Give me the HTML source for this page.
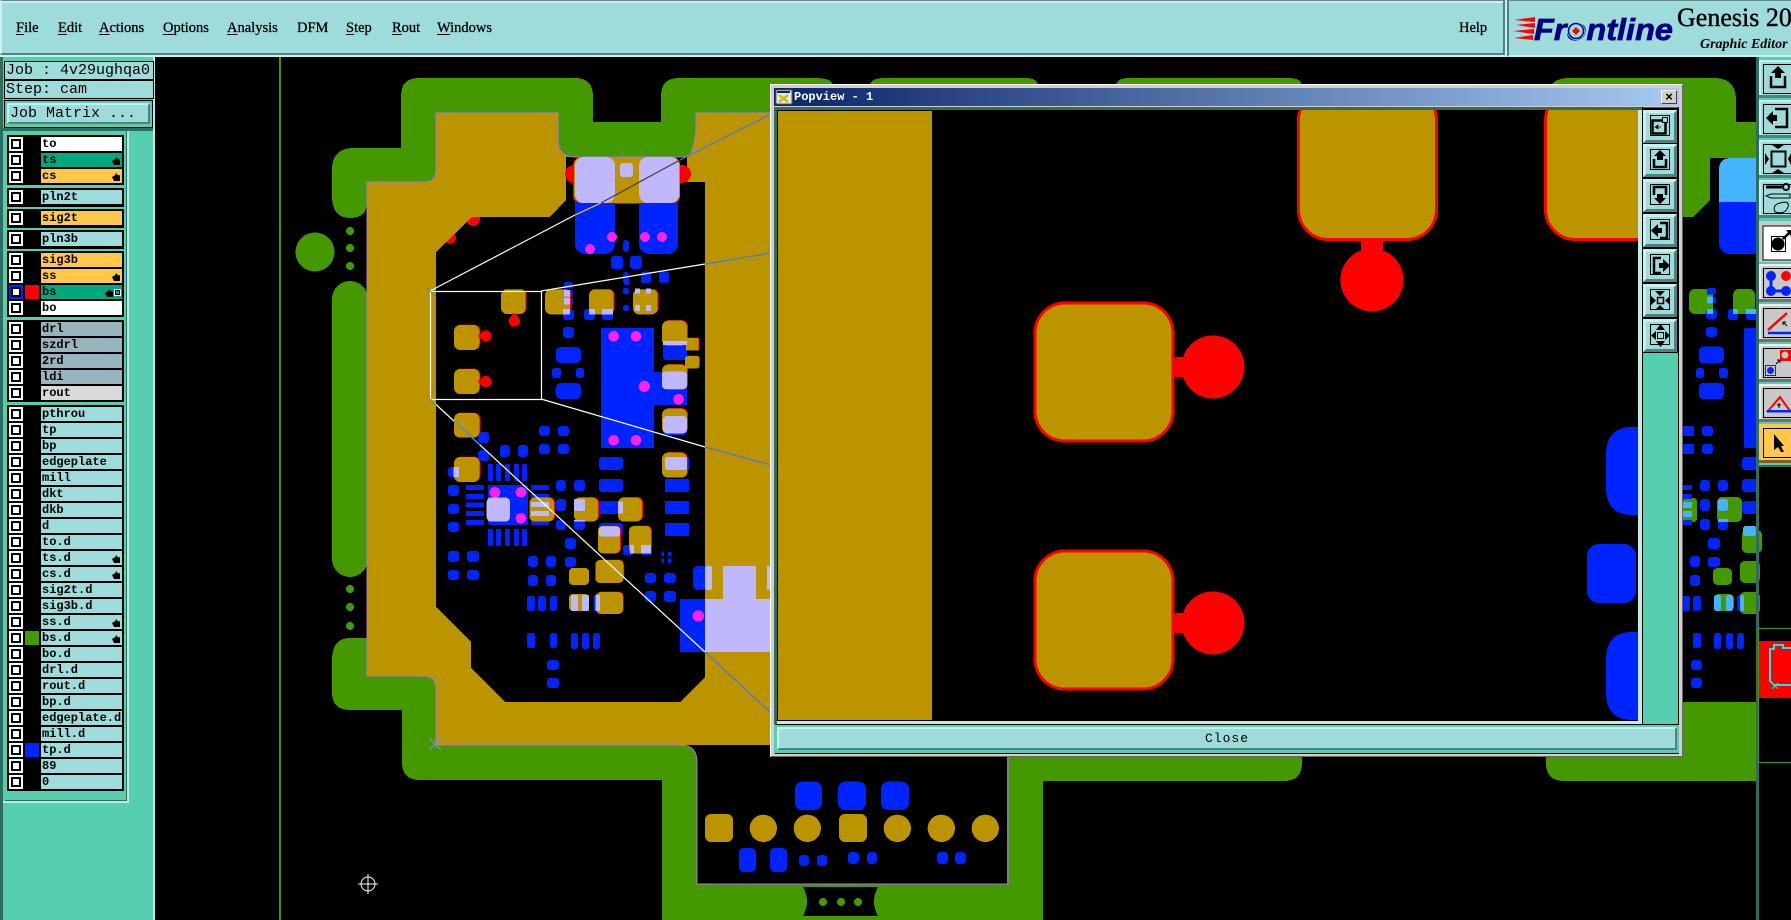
<!DOCTYPE html>
<html><head><meta charset="utf-8"><title>Genesis 2000 Graphic Editor</title>
<style>
html,body{margin:0;padding:0;background:#000;width:1791px;height:920px;overflow:hidden}
body{position:relative;font-family:"Liberation Mono",monospace;color:#000}
.a{position:absolute}
svg{position:absolute;left:0;top:0;display:block}
.m{position:absolute;top:20px;font:14.5px/17px "Liberation Serif",serif;-webkit-text-stroke:.3px #000;white-space:nowrap}
.m u{text-underline-offset:2px}
.inf{position:absolute;left:4px;width:147px;background:#9edcdc;border:1px solid #000;font:15px/17px "Liberation Mono",monospace;padding-left:1px;white-space:pre;overflow:hidden}
.grp{position:absolute;left:7px;width:117px;background:#000}
.r{position:absolute;left:9px;width:113px;height:14px}
.r i{position:absolute;left:0;top:0;width:14px;height:14px;background:#fff}
.r i::after{content:"";position:absolute;left:2px;top:2px;width:6px;height:6px;border:2px solid #000;background:#fff}
.r.sel i{background:#0024ff}
.r b{position:absolute;left:32px;top:0;width:80px;height:14px;padding-left:1px;background:#9edcdc;font:bold 12px/14px "Liberation Mono",monospace;white-space:nowrap;overflow:hidden}
.h{position:absolute;right:2px;top:4px;width:8px;height:8px;background:#000;clip-path:polygon(0 50%,35% 30%,55% 0,70% 25%,100% 30%,100% 100%,25% 100%)}
.s{position:absolute;left:16px;top:0;width:14px;height:14px}
.W b{background:#fff}.T b{background:#00a87e}.O b{background:#ffc84b}.G b{background:#9ab4bd}.L b{background:#d9d9d9}
</style></head><body>

<!-- PCB canvas -->
<svg width="1791" height="920" viewBox="0 0 1791 920" shape-rendering="crispEdges">
<rect x="279" y="57" width="2" height="863" fill="#449900"/>
<g fill="#449900">
<path d="M332 170Q332 148 354 148H401V96Q401 78 419 78H575Q593 78 593 96V122H661V96Q661 78 679 78H815Q833 78 833 86V157H436V182H367V202Q367 218 350 218Q332 218 332 196Z"/>
<path d="M870 86Q870 78 885 78H1025Q1038 78 1038 86V100H870Z"/>
<path d="M1116 86Q1116 78 1130 78H1288Q1302 78 1302 86V100H1116Z"/>
<rect x="332" y="281" width="36" height="296" rx="18"/>
<path d="M332 660Q332 638 350 638H440V745H700V780H420Q402 780 402 762V710H350Q332 710 332 692Z"/>
<rect x="662" y="745" width="381" height="175"/>
<path d="M1005 745H1302V763Q1302 781 1284 781H1005Z"/>
<path d="M1547 100Q1547 78 1569 78H1714Q1736 78 1736 100V122H1756V158H1710V200L1693 217H1540Z"/>
<path d="M1546 720H1683V702H1756V781H1564Q1546 781 1546 763Z"/>
<circle cx="315" cy="252" r="19.5"/>
<circle cx="350" cy="231" r="4"/><circle cx="350" cy="248" r="4"/><circle cx="350" cy="266" r="4"/>
<circle cx="350" cy="589" r="4"/><circle cx="350" cy="607" r="4"/><circle cx="350" cy="626" r="4"/>
</g>
<rect x="697" y="745" width="310" height="139" fill="#000"/>
<path d="M803 887H878Q870 901 878 916H803Q811 901 803 887Z" fill="#000"/>
<g fill="#449900"><circle cx="823" cy="902" r="4"/><circle cx="841" cy="902" r="4"/><circle cx="858" cy="902" r="4"/></g>
<!-- red partly behind the copper -->
<g fill="#f00"><circle cx="473" cy="219" r="7"/><circle cx="450" cy="238" r="6"/></g>
<!-- gold copper -->
<path fill="#bb9400" d="M367 182H424Q436 182 436 170V113H558V140Q558 150 566 155V200L550 217H472L436 252V607L471 642V668L505 702H680L705 677V182H687V157Q696 150 696 113H790V745H436V688Q436 676 424 676H367Z"/>
<rect x="680" y="745" width="17" height="12" fill="#449900"/>
<path d="M680 745Q697 745 697 762V745Z" fill="#000"/>
<g fill="none" stroke="#b070f0" stroke-width="1" shape-rendering="auto">
<path d="M367 676V182H424Q436 182 436 170V113H558V140Q558 157 575 157H680Q696 157 696 140V113H770"/>
<path d="M367 676H424Q436 676 436 688V745H680Q697 745 697 762V884H1008V757"/>
</g>
<g fill="#f00"><circle cx="574" cy="174" r="9"/><circle cx="682" cy="174" r="9"/></g>
<!-- top pads -->
<rect x="573" y="157" width="107" height="47" fill="#f00" rx="8"/>
<g fill="#0024ff">
<rect x="575" y="157" width="40" height="97" rx="10"/>
<rect x="639" y="157" width="39" height="97" rx="10"/>
<rect x="623" y="240" width="6" height="12" rx="3"/>
<rect x="611" y="256" width="12" height="13" rx="3"/>
<rect x="630" y="256" width="12" height="13" rx="3"/>
<rect x="623" y="272" width="6" height="12" rx="3"/>
<rect x="641" y="272" width="10" height="11" rx="2"/>
<rect x="659" y="272" width="10" height="11" rx="2"/>
<rect x="623" y="288" width="6" height="6" rx="2"/>
</g>
<rect x="574" y="157" width="106" height="46" fill="#bb9400" rx="8"/>
<g fill="#c0b8ff">
<rect x="575" y="157" width="40" height="46" rx="9"/>
<rect x="639" y="157" width="40" height="46" rx="9"/>
<rect x="620" y="163" width="13" height="14" rx="3"/>
</g>
<g fill="#ff22ee">
<circle cx="612" cy="237" r="5"/><circle cx="590" cy="249" r="5"/><circle cx="645" cy="237" r="5"/><circle cx="662" cy="237" r="5"/>
</g>

<!-- centre cluster (coords are 3x crop) -->
<g transform="translate(430 270) scale(.33333)">
<g fill="#0024ff">
<path d="M513 174H672V306H771V405H672V534H513Z"/>
<rect x="378" y="231" width="75" height="48" rx="14"/><rect x="378" y="339" width="75" height="48" rx="14"/>
<rect x="366" y="294" width="27" height="30" rx="8"/><rect x="438" y="294" width="24" height="30" rx="8"/>
<rect x="399" y="171" width="33" height="33" rx="9"/><rect x="399" y="117" width="33" height="33" rx="9"/>
<rect x="462" y="117" width="33" height="33" rx="9"/><rect x="516" y="117" width="33" height="33" rx="9"/>
<rect x="402" y="36" width="27" height="20" rx="6"/><rect x="402" y="60" width="27" height="20" rx="6"/><rect x="402" y="84" width="27" height="20" rx="6"/>
<rect x="582" y="10" width="15" height="36" rx="6"/><rect x="633" y="5" width="30" height="33" rx="8"/><rect x="687" y="5" width="30" height="33" rx="8"/>
<rect x="579" y="54" width="18" height="18" rx="6"/><rect x="579" y="105" width="18" height="18" rx="6"/>
<rect x="615" y="55" width="15" height="15" rx="3"/><rect x="648" y="55" width="15" height="15" rx="3"/>
<rect x="699" y="216" width="72" height="54" rx="10"/>
<rect x="699" y="438" width="72" height="57" rx="10"/>
<rect x="720" y="561" width="57" height="39"/>
<rect x="507" y="561" width="72" height="39" rx="9"/><rect x="507" y="627" width="72" height="39" rx="9"/><rect x="507" y="693" width="72" height="39" rx="9"/><rect x="507" y="759" width="72" height="39" rx="9"/>
<rect x="705" y="627" width="72" height="39" rx="4"/><rect x="705" y="693" width="72" height="39" rx="4"/><rect x="705" y="759" width="72" height="39" rx="4"/>
<rect x="327" y="468" width="33" height="30" rx="9"/><rect x="384" y="468" width="33" height="30" rx="9"/><rect x="327" y="522" width="33" height="30" rx="9"/><rect x="384" y="522" width="33" height="30" rx="9"/>
<rect x="144" y="486" width="33" height="33" rx="9"/><rect x="144" y="540" width="33" height="33" rx="9"/>
<rect x="210" y="525" width="30" height="36" rx="9"/><rect x="264" y="525" width="30" height="36" rx="9"/>
<rect x="174" y="582" width="15" height="51" rx="3"/><rect x="198" y="582" width="15" height="51" rx="3"/><rect x="225" y="582" width="15" height="51" rx="3"/><rect x="252" y="582" width="15" height="51" rx="3"/><rect x="276" y="582" width="15" height="51" rx="3"/>
<rect x="174" y="777" width="15" height="51" rx="3"/><rect x="198" y="777" width="15" height="51" rx="3"/><rect x="225" y="777" width="15" height="51" rx="3"/><rect x="252" y="777" width="15" height="51" rx="3"/><rect x="276" y="777" width="15" height="51" rx="3"/>
<rect x="108" y="645" width="54" height="15" rx="3"/><rect x="108" y="672" width="54" height="15" rx="3"/><rect x="108" y="697" width="54" height="15" rx="3"/><rect x="108" y="723" width="54" height="15" rx="3"/><rect x="108" y="750" width="54" height="15" rx="3"/>
<rect x="303" y="645" width="54" height="15" rx="3"/><rect x="303" y="672" width="54" height="15" rx="3"/><rect x="303" y="750" width="54" height="15" rx="3"/>
<rect x="174" y="645" width="120" height="120" rx="6"/>
<rect x="54" y="591" width="33" height="30" rx="9"/><rect x="54" y="645" width="33" height="33" rx="9"/><rect x="54" y="702" width="33" height="30" rx="9"/><rect x="54" y="756" width="33" height="30" rx="9"/>
<rect x="378" y="630" width="30" height="33" rx="9"/><rect x="432" y="630" width="33" height="33" rx="9"/><rect x="378" y="687" width="30" height="36" rx="9"/><rect x="378" y="750" width="30" height="30" rx="9"/><rect x="432" y="750" width="33" height="30" rx="9"/><rect x="405" y="804" width="33" height="33" rx="9"/>
<rect x="579" y="825" width="33" height="30" rx="8"/><rect x="633" y="825" width="33" height="30" rx="8"/>
</g>
<g fill="#bb9400" style="filter:drop-shadow(3px -1px 0 #f00)">
<rect x="213" y="58" width="74" height="74" rx="18"/><rect x="72" y="165" width="76" height="75" rx="18"/><rect x="72" y="297" width="76" height="75" rx="18"/><rect x="72" y="429" width="76" height="74" rx="18"/><rect x="72" y="561" width="76" height="75" rx="18"/>
<rect x="345" y="58" width="75" height="75" rx="18"/><rect x="477" y="58" width="74" height="75" rx="18"/><rect x="609" y="58" width="74" height="75" rx="18"/>
<rect x="696" y="152" width="75" height="75" rx="18"/><rect x="696" y="284" width="75" height="75" rx="18"/><rect x="696" y="416" width="75" height="75" rx="18"/><rect x="696" y="548" width="75" height="75" rx="18"/>
<rect x="768" y="204" width="38" height="38" rx="4"/><rect x="765" y="258" width="42" height="38" rx="8"/>
<rect x="298" y="682" width="74" height="73" rx="18"/><rect x="432" y="682" width="72" height="73" rx="18"/><rect x="564" y="682" width="72" height="73" rx="18"/>
<rect x="504" y="768" width="66" height="82" rx="14"/><rect x="597" y="768" width="66" height="82" rx="14"/>
</g>
<g fill="#f00">
<circle cx="253" cy="153" r="17"/><rect x="247" y="130" width="12" height="12"/>
<circle cx="168" cy="198" r="17"/><rect x="146" y="192" width="10" height="12"/>
<circle cx="168" cy="335" r="17"/><rect x="146" y="329" width="10" height="12"/>
</g>
<g fill="#c0b8ff">
<rect x="699" y="213" width="72" height="12"/>
<rect x="402" y="60" width="18" height="20"/><rect x="402" y="84" width="18" height="20"/><rect x="399" y="117" width="21" height="16"/>
<rect x="477" y="117" width="18" height="16"/><rect x="516" y="117" width="33" height="16"/>
<rect x="615" y="55" width="15" height="15"/><rect x="648" y="55" width="15" height="15"/><rect x="615" y="105" width="15" height="18"/><rect x="648" y="105" width="15" height="18"/>
<rect x="696" y="305" width="75" height="52" rx="10"/><rect x="699" y="438" width="72" height="52" rx="12"/><rect x="705" y="561" width="66" height="39" rx="8"/>
<rect x="70" y="591" width="17" height="30"/>
<rect x="303" y="696" width="54" height="15"/><rect x="303" y="723" width="54" height="15"/>
<rect x="432" y="687" width="33" height="36" rx="5"/>
<rect x="564" y="695" width="15" height="36"/>
<rect x="432" y="750" width="33" height="5"/>
<rect x="507" y="770" width="63" height="30" rx="8"/>
<rect x="600" y="825" width="12" height="25"/><rect x="633" y="825" width="30" height="25"/>
</g>
<g fill="#0024ff"><rect x="507" y="693" width="57" height="39" rx="8"/></g>
<g fill="#ff22ee">
<circle cx="551" cy="199" r="16"/><circle cx="618" cy="199" r="16"/><circle cx="643" cy="349" r="17"/><circle cx="746" cy="388" r="16"/><circle cx="551" cy="511" r="16"/><circle cx="618" cy="511" r="16"/>
<circle cx="195" cy="667" r="16"/><circle cx="273" cy="667" r="16"/><circle cx="273" cy="745" r="16"/>
</g>
<rect x="170" y="682" width="70" height="73" rx="14" fill="#c0b8ff"/>
</g>

<!-- lower cluster -->
<g transform="translate(430 540) scale(.33333)">
<g fill="#0024ff">
<rect x="54" y="33" width="33" height="33" rx="9"/><rect x="111" y="33" width="36" height="33" rx="9"/><rect x="54" y="90" width="33" height="30" rx="9"/><rect x="111" y="90" width="36" height="30" rx="9"/>
<rect x="294" y="48" width="30" height="33" rx="9"/><rect x="348" y="48" width="30" height="33" rx="9"/><rect x="405" y="51" width="33" height="30" rx="9"/><rect x="294" y="105" width="30" height="33" rx="9"/><rect x="348" y="105" width="30" height="33" rx="9"/>
<rect x="291" y="168" width="24" height="45" rx="7"/><rect x="324" y="168" width="24" height="45" rx="7"/><rect x="360" y="168" width="21" height="45" rx="7"/>
<rect x="291" y="279" width="24" height="45" rx="7"/><rect x="360" y="279" width="21" height="45" rx="7"/><rect x="423" y="279" width="21" height="48" rx="7"/><rect x="456" y="279" width="21" height="48" rx="7"/><rect x="489" y="279" width="21" height="48" rx="7"/>
<rect x="351" y="360" width="36" height="30" rx="9"/><rect x="351" y="414" width="36" height="30" rx="9"/>
<rect x="694" y="35" width="8" height="14" rx="2"/><rect x="714" y="35" width="10" height="14" rx="2"/><rect x="694" y="55" width="8" height="14" rx="2"/><rect x="714" y="55" width="10" height="14" rx="2"/>
<rect x="645" y="99" width="33" height="30" rx="9"/><rect x="702" y="99" width="36" height="30" rx="9"/><rect x="645" y="153" width="33" height="33" rx="9"/><rect x="702" y="153" width="36" height="33" rx="9"/>
<rect x="789" y="78" width="57" height="72" rx="14"/>
<rect x="750" y="177" width="75" height="159"/>
<rect x="490" y="165" width="12" height="48" rx="4"/>
</g>
<g fill="#bb9400" style="filter:drop-shadow(2px -1px 0 #f00)">
<rect x="496" y="60" width="84" height="69" rx="14"/><rect x="498" y="156" width="81" height="66" rx="14"/>
</g>
<g fill="#bb9400">
<rect x="417" y="84" width="60" height="51" rx="12"/><rect x="417" y="162" width="60" height="51" rx="12"/>
</g>
<g fill="#c0b8ff">
<rect x="423" y="165" width="21" height="48" rx="5"/><rect x="456" y="165" width="21" height="48" rx="5"/><rect x="497" y="165" width="13" height="48" rx="4"/>
<rect x="825" y="78" width="21" height="72" rx="6"/><rect x="879" y="78" width="99" height="99"/><rect x="825" y="177" width="195" height="159"/><rect x="1011" y="78" width="9" height="72" rx="3"/>
</g>
<circle cx="805" cy="228" r="17" fill="#ff22ee"/>
</g>

<!-- right of popup cluster -->
<g transform="translate(1600 290) scale(.33333)">
<g fill="#449900">
<rect x="267" y="-3" width="72" height="75" rx="18"/><rect x="399" y="-3" width="66" height="75" rx="18"/>
<rect x="249" y="624" width="42" height="72" rx="10"/><rect x="351" y="621" width="75" height="75" rx="16"/>
<rect x="426" y="720" width="60" height="69" rx="14"/>
<rect x="339" y="834" width="57" height="51" rx="14"/><rect x="420" y="813" width="60" height="66" rx="14"/><rect x="420" y="906" width="60" height="66" rx="14"/><rect x="342" y="912" width="60" height="51" rx="14"/>
</g>
<g fill="#0024ff">
<rect x="321" y="-6" width="27" height="20" rx="6"/><rect x="321" y="20" width="27" height="20" rx="5"/>
<rect x="318" y="57" width="33" height="30" rx="9"/><rect x="384" y="57" width="30" height="33" rx="9"/><rect x="438" y="57" width="40" height="33" rx="9"/>
<rect x="318" y="111" width="33" height="30" rx="9"/>
<rect x="297" y="170" width="75" height="50" rx="12"/><rect x="288" y="234" width="24" height="30" rx="8"/><rect x="357" y="234" width="27" height="30" rx="8"/><rect x="297" y="279" width="75" height="48" rx="12"/>
<rect x="432" y="114" width="40" height="360" rx="6"/>
<rect x="249" y="408" width="33" height="30" rx="5"/><rect x="306" y="408" width="33" height="30" rx="9"/><rect x="249" y="462" width="33" height="30" rx="5"/><rect x="306" y="462" width="33" height="30" rx="9"/>
<rect x="426" y="501" width="50" height="39" rx="10"/><rect x="426" y="567" width="50" height="39" rx="10"/><rect x="426" y="633" width="50" height="39" rx="10"/>
<rect x="249" y="585" width="27" height="15"/><rect x="249" y="612" width="27" height="15"/><rect x="249" y="690" width="27" height="15"/>
<rect x="300" y="570" width="30" height="33" rx="9"/><rect x="354" y="570" width="30" height="33" rx="9"/><rect x="300" y="627" width="30" height="36" rx="9"/><rect x="300" y="687" width="30" height="33" rx="9"/><rect x="354" y="687" width="30" height="33" rx="9"/>
<rect x="324" y="744" width="36" height="33" rx="9"/><rect x="270" y="798" width="30" height="33" rx="9"/><rect x="324" y="801" width="36" height="30" rx="9"/><rect x="270" y="855" width="30" height="33" rx="9"/>
<rect x="249" y="918" width="21" height="45" rx="5"/><rect x="279" y="918" width="24" height="45" rx="7"/><rect x="411" y="915" width="21" height="48" rx="7"/>
<rect x="279" y="1029" width="24" height="45" rx="7"/><rect x="342" y="1029" width="21" height="48" rx="7"/><rect x="378" y="1029" width="21" height="48" rx="7"/><rect x="411" y="1029" width="21" height="48" rx="7"/>
<rect x="273" y="1110" width="33" height="30" rx="9"/><rect x="273" y="1164" width="33" height="30" rx="9"/>
</g>
<g fill="#44b4ff">
<rect x="321" y="20" width="18" height="20" rx="4"/><rect x="321" y="57" width="18" height="15"/><rect x="399" y="57" width="15" height="15"/><rect x="438" y="57" width="30" height="15"/>
<rect x="354" y="627" width="30" height="36" rx="8"/><rect x="249" y="636" width="27" height="18"/><rect x="249" y="663" width="27" height="18"/><rect x="354" y="687" width="30" height="9"/>
<rect x="429" y="708" width="40" height="30" rx="8"/>
<rect x="342" y="915" width="21" height="48" rx="7"/><rect x="378" y="915" width="21" height="48" rx="7"/><rect x="420" y="915" width="12" height="48" rx="4"/>
</g>
</g>
<!-- blue pad top right -->
<rect x="1719" y="158" width="60" height="96" rx="11" fill="#0024ff"/>
<path d="M1719 202V170Q1719 158 1731 158H1790V202Z" fill="#44b4ff"/>

<!-- U-shaped bottom pads -->
<g transform="translate(640 730) scale(.33333)">
<g fill="#0024ff">
<rect x="465" y="155" width="81" height="85" rx="22"/><rect x="594" y="155" width="84" height="85" rx="22"/><rect x="723" y="155" width="84" height="85" rx="22"/>
<rect x="297" y="354" width="51" height="72" rx="14"/><rect x="390" y="354" width="51" height="72" rx="14"/>
<rect x="477" y="375" width="30" height="33" rx="11"/><rect x="531" y="375" width="30" height="33" rx="11"/>
<rect x="624" y="366" width="33" height="36" rx="11"/><rect x="681" y="366" width="30" height="36" rx="11"/>
<rect x="891" y="366" width="33" height="36" rx="11"/><rect x="945" y="366" width="33" height="36" rx="11"/>
</g>
<g fill="#bb9400">
<rect x="195" y="252" width="84" height="84" rx="18"/><circle cx="370" cy="295" r="41"/><circle cx="502" cy="295" r="41"/>
<rect x="597" y="252" width="84" height="84" rx="18"/><circle cx="772" cy="295" r="41"/><circle cx="904" cy="295" r="41"/><circle cx="1036" cy="295" r="41"/>
</g>
</g>

<!-- view box + connecting lines -->
<g shape-rendering="auto" fill="none">
<rect x="430.5" y="291.5" width="111" height="108" stroke="#fff" stroke-width="1.2"/>
<path d="M430 291L575 215M541 291L705 264M541 399L705 447M430 399L705 652" stroke="#fff" stroke-width="1.2"/>
<path d="M575 215L601 203" stroke="#ffd000" stroke-width="1.2"/>
<path d="M601 203L680 160" stroke="#443a30" stroke-width="1.2"/>
<path d="M680 160L771 114M705 264L771 253M705 447L771 465M705 652L771 713M430 399L436 405M454 421L480 445" stroke="#4a7ae0" stroke-width="1.2"/>
<path d="M427 288L436 296" stroke="#4a7ae0" stroke-width="1"/>
<path d="M429 738L441 750M441 738L429 750" stroke="#8090d0" stroke-width="1"/>
<circle cx="368" cy="884" r="7" stroke="#fff"/>
<path d="M368 874V894M358 884H378" stroke="#fff"/>
</g>
</svg>

<!-- Top bars -->
<div class="a" style="left:0;top:0;width:1505px;height:55px;background:#9edcdc;box-sizing:border-box;border-top:1px solid #608a88;border-bottom:2px solid #508080;border-left:2px solid #c8f0ee;border-right:2px solid #508080;box-shadow:inset 0 2px 0 #c8f0ee"></div>
<div class="a" style="left:0;top:55px;width:1507px;height:2px;background:#c8f0ee"></div>
<div class="a" style="left:1505px;top:0;width:2px;height:57px;background:#c8f0ee"></div>
<div class="a" style="left:1507px;top:0;width:284px;height:57px;background:#9edcdc;box-sizing:border-box;border-top:1px solid #608a88;border-left:2px solid #508080;border-bottom:2px solid #c8f0ee"></div>
<div class="m" style="left:16px"><u>F</u>ile</div>
<div class="m" style="left:58px"><u>E</u>dit</div>
<div class="m" style="left:99px"><u>A</u>ctions</div>
<div class="m" style="left:163px"><u>O</u>ptions</div>
<div class="m" style="left:227px"><u>A</u>nalysis</div>
<div class="m" style="left:297px">DFM</div>
<div class="m" style="left:346px"><u>S</u>tep</div>
<div class="m" style="left:392px"><u>R</u>out</div>
<div class="m" style="left:437px"><u>W</u>indows</div>
<div class="m" style="left:1459px">Help</div>

<!-- Logo -->
<svg width="1791" height="57" viewBox="0 0 1791 57" style="height:57px">
<g fill="#f00">
<path d="M1514 20L1535 17V22Z"/><path d="M1516 25L1535 23V28Z"/><path d="M1513 31L1534 29V34Z"/><path d="M1514 38L1533 35V40Z"/>
</g>
<text x="1534" y="40" textLength="139" lengthAdjust="spacingAndGlyphs" font-family="Liberation Sans" font-weight="bold" font-style="italic" font-size="31" fill="#000080" stroke="#000080" stroke-width=".7">Frontline</text>
<circle cx="1576" cy="31" r="9" fill="#9edcdc"/>
<circle cx="1576" cy="31" r="7.5" fill="none" stroke="#000080" stroke-width="1.5"/>
<path d="M1576 27L1580 31L1576 35L1572 31Z" fill="#f00"/>
<text x="1677" y="26" font-family="Liberation Serif" font-size="26" fill="#000" stroke="#000" stroke-width=".4">Genesis 2000</text>
<text x="1700" y="48" font-family="Liberation Serif" font-weight="bold" font-style="italic" font-size="14" fill="#000">Graphic Editor</text>
</svg>

<!-- Left panel -->
<div class="a" style="left:0;top:57px;width:155px;height:863px;background:#56ceb0"></div>
<div class="a" style="left:153px;top:57px;width:2px;height:863px;background:#b8ece0"></div>
<div class="a" style="left:0;top:57px;width:3px;height:863px;background:#2f6d5f"></div>
<div class="inf" style="top:61px;height:17px">Job : 4v29ughqa0</div>
<div class="inf" style="top:80px;height:17px">Step: cam</div>
<div class="a" style="left:4px;top:100px;width:147px;height:26px;border:1px solid #000"></div>
<div class="a" style="left:7px;top:103px;width:143px;height:21px;box-sizing:border-box;background:#9edcdc;border-top:2px solid #c8f0ee;border-left:2px solid #c8f0ee;border-bottom:2px solid #508080;border-right:2px solid #508080;font:15px/17px 'Liberation Mono',monospace;padding-left:1px;white-space:pre">Job Matrix ...</div>
<div class="a" style="left:3px;top:128px;width:150px;height:3px;background:#2f6d5f"></div>
<div class="a" style="left:126px;top:131px;width:1px;height:670px;background:#2f6d5f"></div>
<div class="a" style="left:127px;top:131px;width:2px;height:672px;background:#b8ece0"></div>
<div class="a" style="left:5px;top:800px;width:122px;height:1px;background:#2f6d5f"></div>
<div class="a" style="left:3px;top:801px;width:126px;height:2px;background:#b8ece0"></div>

<div class="grp" style="top:135px;height:50px"></div>
<div class="grp" style="top:188px;height:19px"></div>
<div class="grp" style="top:209px;height:19px"></div>
<div class="grp" style="top:230px;height:19px"></div>
<div class="grp" style="top:251px;height:66px"></div>
<div class="grp" style="top:320px;height:82px"></div>
<div class="grp" style="top:405px;height:386px"></div>

<div class="r W" style="top:137px"><i></i><b>to</b></div>
<div class="r T" style="top:153px"><i></i><b>ts<span class="h"></span></b></div>
<div class="r O" style="top:169px"><i></i><b>cs<span class="h"></span></b></div>
<div class="r" style="top:190px"><i></i><b>pln2t</b></div>
<div class="r O" style="top:211px"><i></i><b>sig2t</b></div>
<div class="r" style="top:232px"><i></i><b>pln3b</b></div>
<div class="r O" style="top:253px"><i></i><b>sig3b</b></div>
<div class="r O" style="top:269px"><i></i><b>ss<span class="h"></span></b></div>
<div class="r T sel" style="top:285px"><i></i><span class="s" style="background:#f00"></span><b>bs<span class="h" style="right:9px"></span><span class="a" style="right:2px;top:5px;width:3px;height:3px;border:1px solid #000;outline:1px solid #fff"></span></b></div>
<div class="r W" style="top:301px"><i></i><b>bo</b></div>
<div class="r G" style="top:322px"><i></i><b>drl</b></div>
<div class="r G" style="top:338px"><i></i><b>szdrl</b></div>
<div class="r G" style="top:354px"><i></i><b>2rd</b></div>
<div class="r G" style="top:370px"><i></i><b>ldi</b></div>
<div class="r L" style="top:386px"><i></i><b>rout</b></div>
<div class="r" style="top:407px"><i></i><b>pthrou</b></div>
<div class="r" style="top:423px"><i></i><b>tp</b></div>
<div class="r" style="top:439px"><i></i><b>bp</b></div>
<div class="r" style="top:455px"><i></i><b>edgeplate</b></div>
<div class="r" style="top:471px"><i></i><b>mill</b></div>
<div class="r" style="top:487px"><i></i><b>dkt</b></div>
<div class="r" style="top:503px"><i></i><b>dkb</b></div>
<div class="r" style="top:519px"><i></i><b>d</b></div>
<div class="r" style="top:535px"><i></i><b>to.d</b></div>
<div class="r" style="top:551px"><i></i><b>ts.d<span class="h"></span></b></div>
<div class="r" style="top:567px"><i></i><b>cs.d<span class="h"></span></b></div>
<div class="r" style="top:583px"><i></i><b>sig2t.d</b></div>
<div class="r" style="top:599px"><i></i><b>sig3b.d</b></div>
<div class="r" style="top:615px"><i></i><b>ss.d<span class="h"></span></b></div>
<div class="r" style="top:631px"><i></i><span class="s" style="background:#449900"></span><b>bs.d<span class="h"></span></b></div>
<div class="r" style="top:647px"><i></i><b>bo.d</b></div>
<div class="r" style="top:663px"><i></i><b>drl.d</b></div>
<div class="r" style="top:679px"><i></i><b>rout.d</b></div>
<div class="r" style="top:695px"><i></i><b>bp.d</b></div>
<div class="r" style="top:711px"><i></i><b>edgeplate.d</b></div>
<div class="r" style="top:727px"><i></i><b>mill.d</b></div>
<div class="r" style="top:743px"><i></i><span class="s" style="background:#0024ff"></span><b>tp.d</b></div>
<div class="r" style="top:759px"><i></i><b>89</b></div>
<div class="r" style="top:775px"><i></i><b>0</b></div>

<!-- Popup window -->
<div class="a" style="left:770px;top:84px;width:913px;height:673px;box-sizing:border-box;background:#d4d0c8;border-top:1px solid #fff;border-left:1px solid #fff;border-right:1px solid #666;border-bottom:1px solid #666"></div>
<div class="a" style="left:774px;top:88px;width:905px;height:18px;background:linear-gradient(90deg,#0a246a,#a6caf0)"></div>
<div class="a" style="left:794px;top:89px;color:#fff;font:bold 12px/16px 'Liberation Mono',monospace;white-space:pre">Popview - 1</div>
<div class="a" style="left:1661px;top:90px;width:16px;height:14px;box-sizing:border-box;background:#d4d0c8;border:1px solid;border-color:#fff #404040 #404040 #fff;font:bold 13px/11px 'Liberation Sans',sans-serif;text-align:center">×</div>
<svg width="1791" height="920" viewBox="0 0 1791 920">
<rect x="776" y="90" width="16" height="14" fill="#e8e8e8" stroke="#555"/>
<rect x="777" y="91" width="13" height="2" fill="#0a246a"/>
<path d="M779 95L788 102M788 95L779 102" stroke="#c8c000" stroke-width="2.5"/>
</svg>
<div class="a" style="left:774px;top:107px;width:905px;height:647px;background:#56ceb0"></div>
<div class="a" style="left:774px;top:107px;width:905px;height:3px;background:#2f6d5f"></div>
<div class="a" style="left:774px;top:107px;width:3px;height:617px;background:#2f6d5f"></div>

<svg width="1791" height="920" viewBox="0 0 1791 920" shape-rendering="crispEdges" style="clip-path:inset(110px 153px 198px 777px)">
<rect x="777" y="110" width="861" height="612" fill="#000"/>
<rect x="778" y="111" width="154" height="609" fill="#bb9400"/>
<g fill="#f00">
<circle cx="1372" cy="280" r="31.5"/><rect x="1361" y="238" width="22" height="20"/>
<circle cx="1213" cy="367" r="31.5"/><rect x="1170" y="357" width="20" height="20"/>
<circle cx="1213" cy="623" r="31.5"/><rect x="1170" y="613" width="20" height="20"/>
</g>
<g fill="#bb9400" stroke="#f00" stroke-width="3">
<rect x="1298.5" y="90" width="138" height="149.5" rx="30"/>
<rect x="1545.5" y="90" width="138" height="149.5" rx="30"/>
<rect x="1035" y="303" width="138" height="138" rx="30"/>
<rect x="1035" y="551" width="138" height="138" rx="30"/>
</g>
<g fill="#0024ff">
<path d="M1638 427H1632Q1606 427 1606 455V487Q1606 515 1632 515H1638Z"/>
<rect x="1587" y="544" width="49" height="59" rx="12"/>
<path d="M1638 632H1632Q1606 632 1606 660V692Q1606 720 1632 720H1638Z"/>
</g>
</svg>

<div class="a" style="left:1638px;top:110px;width:4px;height:614px;background:#c4ecde"></div>
<div class="a" style="left:777px;top:721px;width:865px;height:3px;background:#c4ecde"></div>
<div class="a" style="left:1642px;top:107px;width:1px;height:617px;background:#000"></div>
<div class="a" style="left:1678px;top:107px;width:1px;height:617px;background:#000"></div>
<div class="a" style="left:775px;top:724px;width:904px;height:1px;background:#000"></div>
<div class="a" style="left:775px;top:753px;width:904px;height:1px;background:#000"></div>
<div class="a" style="left:777px;top:727px;width:900px;height:23px;box-sizing:border-box;background:#9edcdc;border-top:2px solid #c8f0ee;border-left:2px solid #c8f0ee;border-bottom:2px solid #508080;border-right:2px solid #508080;text-align:center;font:13px/19px 'Liberation Mono',monospace;letter-spacing:1px">Close</div>

<!-- Popup + toolbar icon buttons -->
<svg width="1791" height="920" viewBox="0 0 1791 920" shape-rendering="crispEdges">
<defs>
<g id="pb">
<rect width="34" height="33" fill="#9edcdc"/>
<path d="M0 0H34L31 3H3V30L0 33Z" fill="#c8f0ee"/>
<path d="M34 0V33H0L3 30H31V3Z" fill="#508080"/>
<rect x="7.5" y="5.500" width="19" height="20" fill="none" stroke="#000"/>
</g>
<g id="tb">
<rect width="40" height="38" fill="#9edcdc"/>
<rect width="40" height="2" fill="#c8f0ee"/><rect width="2" height="38" fill="#c8f0ee"/>
<rect y="35" width="40" height="3" fill="#508080"/>
<rect x="4.5" y="4.500" width="40" height="29" fill="none" stroke="#000"/>
</g>
<g id="gb">
<rect width="40" height="38" fill="#c8c8c8"/>
<rect width="40" height="2" fill="#eee"/><rect width="2" height="38" fill="#eee"/>
<rect y="35" width="40" height="3" fill="#707070"/>
<rect x="4.5" y="4.500" width="40" height="29" fill="none" stroke="#000"/>
</g>
</defs>
<rect x="1643" y="108" width="35" height="245" fill="#000"/>
<rect x="1643" y="353" width="35" height="370" fill="#56ceb0"/>
<use href="#pb" x="1643" y="110"/><use href="#pb" x="1643" y="144"/><use href="#pb" x="1643" y="179"/><use href="#pb" x="1643" y="214"/><use href="#pb" x="1643" y="249"/><use href="#pb" x="1643" y="284"/><use href="#pb" x="1643" y="319"/>
<g shape-rendering="auto">
<g fill="none" stroke="#000"><rect x="1652.500" y="120.500" width="13" height="13" stroke-width="2.500"/><rect x="1662.500" y="117.500" width="5" height="5" fill="#9edcdc"/></g>
<path d="M1655 127l3-2v4zM1657 127h4" fill="#000" stroke="#000" stroke-width=".7"/>
<path d="M1660 150L1654 156H1657V160H1663V156H1666Z" fill="#000"/><path d="M1654 159V167H1666V159" fill="none" stroke="#000" stroke-width="2.500"/>
<path d="M1660 204L1654 198H1657V194H1663V198H1666Z" fill="#000"/><path d="M1654 195V187H1666V195" fill="none" stroke="#000" stroke-width="2.500"/>
<path d="M1651 230.500L1658 224V228H1662V233H1658V237Z" fill="#000"/><path d="M1660 223H1667V238H1660" fill="none" stroke="#000" stroke-width="2.500"/>
<path d="M1670 265.500L1663 259V263H1659V268H1663V272Z" fill="#000"/><path d="M1661 258H1654V273H1661" fill="none" stroke="#000" stroke-width="2.500"/>
<rect x="1657.500" y="297.500" width="6" height="6" fill="none" stroke="#000" stroke-width="1.500"/>
<path d="M1660 296L1655 291H1665ZM1660 305L1655 310H1665ZM1656 300.500L1651 296V305ZM1665 300.500L1670 296V305Z" fill="#000"/>
<rect x="1657.500" y="332.500" width="6" height="6" fill="none" stroke="#000" stroke-width="1"/>
<path d="M1660.500 324L1656 330H1665ZM1660.500 347L1656 341H1665ZM1651 335.500L1656 331V340ZM1670 335.500L1665 331V340Z" fill="#000"/>
</g>

<!-- right toolbar -->
<rect x="1756" y="57" width="35" height="410" fill="#56ceb0"/>
<rect x="1756" y="57" width="3" height="863" fill="#2f6d5f"/>
<rect x="1756" y="465" width="35" height="2" fill="#2f6d5f"/>
<use href="#tb" x="1759" y="60"/><use href="#tb" x="1759" y="100"/><use href="#tb" x="1759" y="140"/><use href="#tb" x="1759" y="180"/>
<rect x="1759" y="221" width="40" height="41" fill="#c8c8c8"/>
<rect x="1763" y="226" width="40" height="34" fill="#fff" stroke="#000"/>
<use href="#gb" x="1759" y="264"/><use href="#gb" x="1759" y="304"/><use href="#gb" x="1759" y="344"/><use href="#gb" x="1759" y="384"/>
<rect x="1759" y="424" width="40" height="39" fill="#ffc84b"/>
<rect x="1759" y="460" width="40" height="3" fill="#806020"/>
<rect x="1763.500" y="428.500" width="40" height="29" fill="none" stroke="#000"/>
<g shape-rendering="auto">
<path d="M1778 66L1771 73H1775V78H1781V73H1785Z" fill="#000"/><path d="M1771 76V87H1785V76" fill="none" stroke="#000" stroke-width="2.500"/>
<path d="M1766 118L1773 111V115H1777V121H1773V125Z" fill="#000"/><path d="M1775 109H1787V127H1775" fill="none" stroke="#000" stroke-width="2.500"/>
<rect x="1771.500" y="151.500" width="14" height="15" fill="none" stroke="#000" stroke-width="2"/>
<path d="M1778 149L1772 145H1784ZM1778 169L1772 173H1784ZM1769 159L1765 153V165ZM1788 159L1791 153V165Z" fill="#000"/>
<path d="M1766 187H1782" stroke="#000" stroke-width="3"/><circle cx="1786" cy="187" r="3" fill="none" stroke="#000" stroke-width="2"/>
<path d="M1766 196L1771 194H1790V198H1771Z" fill="none" stroke="#000"/>
<path d="M1775 212Q1772 205 1780 203Q1790 200 1788 207Q1785 215 1775 212Z" fill="none" stroke="#000"/>
<rect x="1771.500" y="236.500" width="14" height="15" fill="none" stroke="#000"/>
<circle cx="1778" cy="244" r="6.500" fill="#000"/>
<path d="M1783 239L1791 231" stroke="#000" stroke-width="2.500"/><path d="M1786 230H1791V236Z" fill="#000"/>
<path d="M1771 276V291H1786" fill="none" stroke="#0024ff" stroke-width="3"/>
<circle cx="1771" cy="276" r="5" fill="#0024ff"/><circle cx="1786" cy="276" r="5" fill="#f00"/><circle cx="1771" cy="291" r="5" fill="#0024ff"/><circle cx="1786" cy="291" r="5" fill="#0024ff"/>
<path d="M1768 330L1787 313" stroke="#f00" stroke-width="2.500"/><path d="M1768 333H1791" stroke="#0024ff" stroke-width="2.500"/>
<path d="M1783 322L1787 326M1783 322V325M1783 322H1786" stroke="#000" fill="none"/>
<rect x="1780" y="350" width="11" height="11" fill="#f00"/><circle cx="1785" cy="355" r="3.500" fill="#c8c8c8"/>
<rect x="1765.500" y="365.500" width="10" height="10" fill="none" stroke="#0024ff"/><circle cx="1770.500" cy="370.500" r="3.500" fill="#0024ff"/>
<path d="M1776 364L1780 360M1780 360V363M1780 360H1777" stroke="#000" fill="none"/>
<path d="M1780 397L1768 411H1790Z" fill="none" stroke="#f00" stroke-width="2"/><rect x="1767" y="410" width="24" height="2.500" fill="#0024ff"/>
<path d="M1779 403V408M1777 405H1781" stroke="#000"/>
<path d="M1774 434V450L1778 447L1781 452H1784L1781 446H1784Z" fill="#000"/>
</g>

<!-- minimap -->
<rect x="1758" y="628" width="33" height="135" fill="#000"/>
<path d="M1791 628.500H1758.500V762.500H1791" fill="none" stroke="#449900"/>
<rect x="1759" y="641" width="32" height="57" fill="#f00"/>
<path d="M1791 648H1783V645H1774V649H1770V681L1774 685H1791" fill="none" stroke="#00f0f0" stroke-width="2"/>
<path d="M1772 683L1778 689M1778 683L1772 689" stroke="#00f0f0"/>
</svg>
</body></html>
